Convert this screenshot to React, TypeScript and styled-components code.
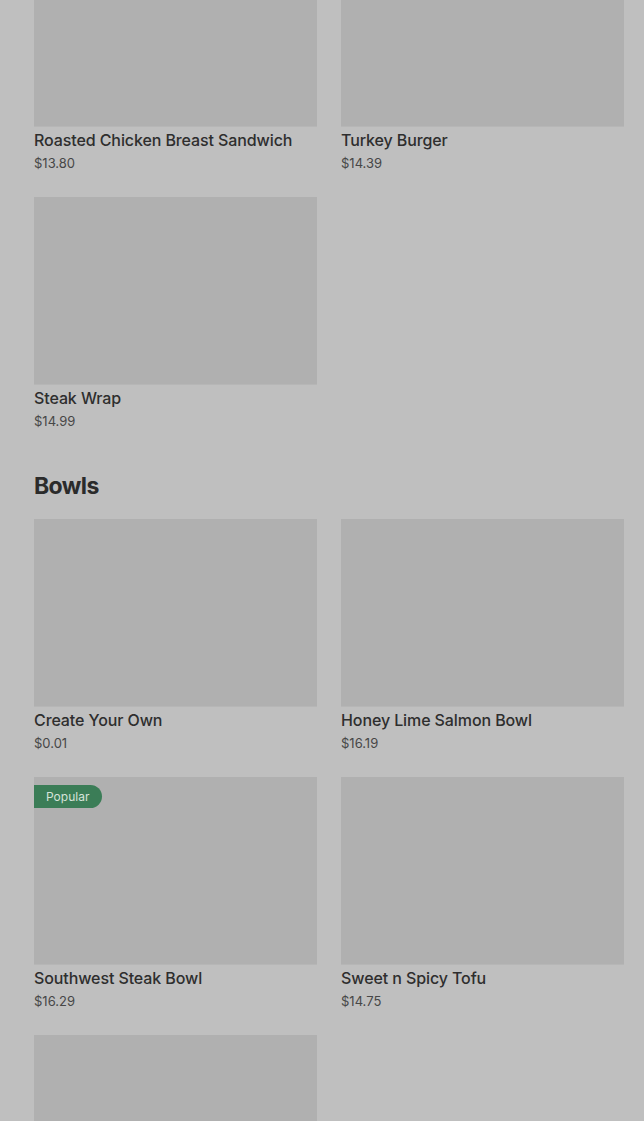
import React, { FC } from 'react';
import styled, { createGlobalStyle } from 'styled-components';

const GlobalStyle = createGlobalStyle`
  html, body {
    margin: 0;
    padding: 0;
    background: #bfbfbf;
  }
  body {
    font-family: Inter, "Noto Sans", Arial, sans-serif;
    color: #2e2e2e;
    overflow: hidden;
  }
`;

const Page = styled.main`
  padding: 0 20px 0 34px;
  margin-top: -61px;
`;

const Section = styled.section`
  & + & {
    margin-top: 39px;
  }
`;

const SectionTitle = styled.h2`
  margin: 0 0 17px;
  font-size: 23px;
  line-height: 32px;
  font-weight: 700;
  letter-spacing: -0.6px;
  color: #2b2b2b;
`;

const Grid = styled.div`
  display: grid;
  grid-template-columns: 283px 283px;
  column-gap: 24px;
  row-gap: 24px;
`;

const Card = styled.div`
  display: flex;
  flex-direction: column;
`;

const Thumb = styled.div`
  position: relative;
  height: 187px;
  background: #b0b0b0;
  border-bottom: 1px solid #b6b6b6;
`;

const Badge = styled.span`
  position: absolute;
  top: 8px;
  left: 0;
  height: 23px;
  padding: 0 13px 0 12px;
  display: flex;
  align-items: center;
  font-size: 12px;
  color: #d6e3da;
  background: #3b7d57;
  border-radius: 0 12px 12px 0;
`;

const Name = styled.div`
  margin-top: 3px;
  font-size: 16px;
  line-height: 20px;
  font-weight: 500;
  letter-spacing: -0.1px;
  color: #2e2e2e;
`;

const Price = styled.div`
  margin-top: 3px;
  font-size: 13px;
  line-height: 20px;
  color: #474747;
`;

type Item = { name: string; price: string; popular?: boolean };

const sandwiches: Item[] = [
  { name: 'Roasted Chicken Breast Sandwich', price: '$13.80' },
  { name: 'Turkey Burger', price: '$14.39' },
  { name: 'Steak Wrap', price: '$14.99' },
];

const bowls: Item[] = [
  { name: 'Create Your Own', price: '$0.01' },
  { name: 'Honey Lime Salmon Bowl', price: '$16.19' },
  { name: 'Southwest Steak Bowl', price: '$16.29', popular: true },
  { name: 'Sweet n Spicy Tofu', price: '$14.75' },
  { name: '', price: '' },
];

const MenuCard: FC<{ item: Item }> = ({ item }) => (
  <Card>
    <Thumb>{item.popular && <Badge>Popular</Badge>}</Thumb>
    {item.name && <Name>{item.name}</Name>}
    {item.price && <Price>{item.price}</Price>}
  </Card>
);

const App: FC = () => (
  <>
    <GlobalStyle />
    <Page>
      <Section>
        <Grid>
          {sandwiches.map((it) => (
            <MenuCard key={it.name} item={it} />
          ))}
        </Grid>
      </Section>
      <Section>
        <SectionTitle>Bowls</SectionTitle>
        <Grid>
          {bowls.map((it, i) => (
            <MenuCard key={i} item={it} />
          ))}
        </Grid>
      </Section>
    </Page>
  </>
);

export default App;
